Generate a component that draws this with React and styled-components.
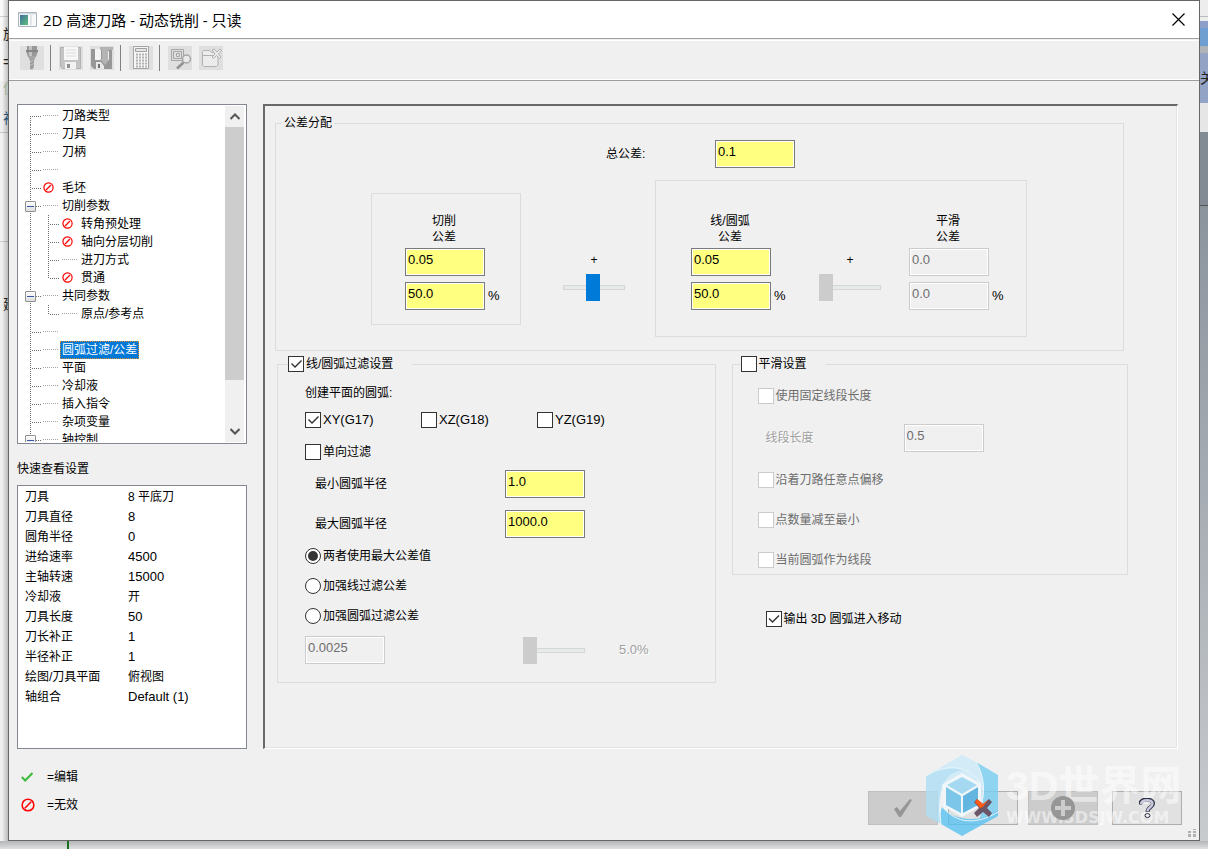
import React, { useState } from 'react';
import styled, { createGlobalStyle, css } from 'styled-components';

const GlobalStyle = createGlobalStyle`
  * {
    box-sizing: border-box;
  }

  body {
    margin: 0;
    background: #e4e5e6;
    color: #000;
    font-family: "Liberation Sans", "Noto Sans CJK SC", sans-serif;
    font-size: 12px;
    line-height: 16px;
  }

  button, input {
    font: inherit;
    color: inherit;
  }
`;

/* ---------- window frame ---------- */

const Desktop = styled.div`
  display: grid;
  grid-template-columns: 8px minmax(0, 1fr) 8px;
  grid-template-rows: 1fr 8px;
  min-height: 100vh;
`;

const LeftEdge = styled.div`
  display: flex;
  flex-direction: column;
  overflow: hidden;
  padding-left: 3px;
  background:
    linear-gradient(90deg, transparent 2px, rgba(0, 0, 0, 0.22)),
    linear-gradient(#fafafa 0 16px, #d0d0d0 16px 17px, #f8f8f8 17px 81px, #f0f0f0 81px 132px, #c8c8c8 132px 133px, #f2f2f2 133px 241px, #ccc 241px 242px, #f0f0f0 242px);
`;

const EdgeGlyph = styled.span`
  height: 20px;
  margin-top: ${({ $gap }) => $gap}px;
  font-size: 14px;
  line-height: 20px;
  white-space: nowrap;
  color: ${({ $color }) => $color || '#222'};
`;

const RightEdge = styled.div`
  overflow: hidden;
  padding-top: 68px;
  background: linear-gradient(
    #ededed 0 16px, #bdbdbd 16px 17px, #ededed 17px 21px, #8d9fc8 21px 28px, #6e9fd0 28px 46px,
    #b0b4b8 46px 53px, #92a3c6 53px 103px, #e6e6e6 103px 132px, #828a94 132px 205px,
    #555 205px 206px, #8b939d 206px, #c9cccf 849px
  );
`;

const BottomEdge = styled.div`
  grid-column: 1 / -1;
  padding-left: 67px;
  background: linear-gradient(#b4b5b6, #dfe0e1);
`;

const GreenMark = styled.div`
  width: 2px;
  height: 8px;
  background: #17711c;
`;

const Dialog = styled.main`
  position: relative;
  display: flex;
  flex-direction: column;
  border: 1px solid #666;
  background: #f0f0f0;
`;

const TitleBar = styled.header`
  display: flex;
  align-items: center;
  height: 38px;
  padding: 0 14px 0 9px;
  border-bottom: 1px solid #a0a0a0;
  background: #fff;
`;

const Title = styled.h1`
  flex: 1;
  margin: 0 0 0 6px;
  font: 15px/20px "Open Sans", "Noto Sans CJK SC", sans-serif;
`;

const CloseButton = styled.button`
  display: flex;
  padding: 0;
  border: 0;
  background: none;
`;

const Toolbar = styled.div`
  display: flex;
  align-items: center;
  height: 41px;
  margin-top: 1px;
  padding: 0 11px 4px 11px;
  border-bottom: 1px solid #9c9c9c;
  box-shadow: inset 0 1px #fff, inset 0 -1px #fff;
`;

const ToolButton = styled.button`
  width: 24px;
  height: 24px;
  margin-right: 7px;
  padding: 0;
  border: 0;
  background: #dfdfdf;

  svg {
    display: block;
  }
`;

const Separator = styled.div`
  width: 1px;
  height: 26px;
  margin: 0 8px 0 -1px;
  background: #808080;
`;

const Body = styled.div`
  flex: 1;
  display: grid;
  grid-template-columns: 230px minmax(0, 1fr);
  gap: 16px;
  padding: 23px 21px 0 8px;
`;

/* ---------- left column ---------- */

const SidePane = styled.div`
  display: flex;
  flex-direction: column;
`;

const TreeBox = styled.div`
  display: flex;
  height: 340px;
  padding: 1px;
  border: 1px solid #828790;
  background: #fff;
`;

const TreeList = styled.ul`
  flex: 1;
  margin: 0;
  padding: 1px 0 0;
  overflow: hidden;
  list-style: none;
`;

const TreeRow = styled.li`
  display: flex;
  align-items: center;
  height: 18px;
  white-space: nowrap;
`;

const trunkHeights = { full: '0 / 1px 100%', top: '0 / 1px 9px', bottom: '9px / 1px 9px' };

const Guide = styled.span`
  flex: none;
  display: flex;
  align-items: center;
  width: ${({ $narrow }) => ($narrow ? 18 : 23)}px;
  height: 18px;
  padding-left: 6px;
  background:
    repeating-linear-gradient(#6d6d6d 0 1px, transparent 1px 2px) 11px ${({ $trunk }) => trunkHeights[$trunk || 'full']} no-repeat,
    repeating-linear-gradient(90deg, #6d6d6d 0 1px, transparent 1px 2px) 13px 9px / ${({ $narrow }) => ($narrow ? 0 : 10)}px 1px no-repeat;
`;

const LevelTwoGuide = styled(Guide)`
  width: 24px;
`;

const Expander = styled.button`
  width: 11px;
  height: 11px;
  padding: 0;
  border: 1px solid #919191;
  border-radius: 1px;
  background: linear-gradient(#3b56a5, #3b56a5) 1px 4px / 7px 1px no-repeat, linear-gradient(#fff, #dedede);
`;

const NodeIcon = styled.span`
  flex: none;
  width: 18px;
  height: 18px;
  padding: 3px 0 0 1px;
  ${({ $empty }) => $empty && css`
    background: repeating-linear-gradient(90deg, #a5a5a5 0 1px, transparent 1px 2px) 1px 8px / 15px 1px no-repeat;
  `}

  svg {
    display: block;
  }
`;

const NodeLabel = styled.span`
  padding: 0 2px;
  ${({ $selected }) => $selected && css`
    outline: 1px dotted #e08a2c;
    outline-offset: -1px;
    background: #0078d7;
    color: #fff;
    line-height: 18px;
  `}
`;

const ScrollBar = styled.div`
  display: flex;
  flex-direction: column;
  width: 19px;
  margin-right: 1px;
  background: #f0f0f0;
`;

const ScrollButton = styled.button`
  display: flex;
  align-items: center;
  justify-content: center;
  height: 21px;
  padding: 0;
  border: 0;
  background: none;
`;

const ScrollTrack = styled.div`
  flex: 1;
`;

const ScrollThumb = styled.div`
  height: 86%;
  background: #cdcdcd;
`;

const QuickTitle = styled.h2`
  margin: 17px 0 8px;
  font-size: 12px;
  font-weight: normal;
  line-height: 16px;
`;

const QuickBox = styled.div`
  flex: 1;
  padding: 1px 7px;
  border: 1px solid #828790;
  background: #fff;
`;

const QuickTable = styled.table`
  width: 100%;
  border-collapse: collapse;

  th, td {
    height: 20px;
    padding: 0;
    font-weight: normal;
    text-align: left;
  }

  th {
    width: 103px;
  }
`;

const Latin = styled.span`
  font-size: 13px;
`;

/* ---------- settings panel ---------- */

const Panel = styled.section`
  padding: 9px 49px 20px 10px;
  border: 2px solid;
  border-width: 2px 1px 1px 2px;
  border-color: #696969 #fff #fff #696969;
  box-shadow: inset -1px -1px #e3e3e3;
`;

const Group = styled.fieldset`
  min-width: 0;
  margin: ${({ $margin }) => $margin || 0};
  padding: ${({ $padding }) => $padding};
  border: 1px solid #dcdcdc;
`;

const Legend = styled.legend`
  height: 16px;
  margin-left: 6px;
  padding: 0 2px;
`;

/* pulled back over the group's own side padding */
const CheckLegend = styled(Legend)`
  margin-left: -17px;
  padding: 0 19px 0 0;
`;

const Lower = styled.div`
  display: grid;
  grid-template-columns: 438fr 396fr;
  gap: 16px;
  align-items: start;
  margin: 5px 0 0 2px;
`;

const TotalRow = styled.div`
  display: flex;
  align-items: center;
  padding-left: 330px;

  label {
    width: 109px;
  }
`;

const SplitRow = styled.div`
  display: flex;
  align-items: center;
  margin-top: 12px;
  padding-left: 95px;
`;

const SubBox = styled.div`
  display: flex;
  align-items: flex-end;
  padding: ${({ $padding }) => $padding};
  border: 1px solid #dcdcdc;
`;

const Stack = styled.div`
  width: 100px;
`;

const StackTitle = styled.div`
  width: 78px;
  margin-bottom: 3px;
  text-align: center;
`;

const StackLine = styled.div`
  display: flex;
  align-items: center;
  gap: 3px;
  margin-top: ${({ $spaced }) => ($spaced ? 6 : 0)}px;
`;

const TextBox = styled.input`
  width: 80px;
  height: 28px;
  padding: 0 2px 5px 2px;
  border: 1px solid #7a7a7a;
  border-radius: 0;
  outline: none;
  background: #ffff80;
  box-shadow: inset 0 0 0 1px #fff;
  font-size: 13px;

  &:disabled {
    border-color: #ccc;
    background: #f0f0f0;
    color: #6d6d6d;
  }
`;

const SliderBox = styled.label`
  display: flex;
  flex-direction: column;
  align-items: center;
  gap: 6px;
  margin: ${({ $margin }) => $margin || 0};
  padding: 44px 0 9px;
`;

const Slider = styled.input`
  appearance: none;
  display: block;
  width: 62px;
  height: 27px;
  margin: 0;
  background: none;

  &::-webkit-slider-runnable-track {
    height: 5px;
    border: 1px solid #d6d6d6;
    background: #e7eaea;
  }

  &::-webkit-slider-thumb {
    appearance: none;
    width: 14px;
    height: 27px;
    margin: -12px -1px 0;
    border: 0;
    border-radius: 0;
    background: ${({ disabled }) => (disabled ? '#ccc' : '#007ad9')};
  }
`;

const Line = styled.div`
  display: flex;
  align-items: center;
  margin-top: ${({ $gap }) => $gap}px;
`;

const OutputLine = styled(Line)`
  padding-left: 34px;
`;

const FieldLabel = styled.label`
  width: ${({ $width }) => $width}px;
  padding-left: ${({ $indent }) => $indent || 0}px;
  ${({ $off }) => $off && css`
    color: #a0a0a0;
    text-shadow: 1px 1px #fff;
  `}
`;

const Percent = styled.span`
  margin-left: 34px;
  color: #a0a0a0;
  font-size: 13px;
  text-shadow: 1px 1px #fff;
`;

const Spacer = styled.div`
  width: 138px;
`;

const CheckLabel = styled.label`
  display: flex;
  align-items: center;
  gap: 2px;
  width: ${({ $width }) => ($width ? `${$width}px` : 'auto')};
  white-space: nowrap;
  color: ${({ $off }) => ($off ? '#6d6d6d' : '#000')};
`;

const CheckInput = styled.input`
  appearance: none;
  flex: none;
  width: 16px;
  height: 16px;
  margin: 0;
  border: 1px solid #333;
  background: #fff;

  &[type='radio'] {
    border-radius: 50%;
  }

  &:disabled {
    border-color: #ccc;
  }

  &:checked::before {
    content: '';
    display: block;
    width: 14px;
    height: 14px;
    background: #333;
    clip-path: polygon(2px 7px, 3px 6px, 6px 9px, 12px 3px, 13px 4px, 6px 11px);
  }

  &[type='radio']:checked::before {
    clip-path: circle(5px at 7px 7px);
  }
`;

/* ---------- footer ---------- */

const Footer = styled.footer`
  position: relative;
  display: flex;
  justify-content: space-between;
  padding: 20px 17px 15px 12px;
`;

const KeyList = styled.div`
  display: grid;
  align-content: start;
  gap: 12px;
`;

const KeyRow = styled.div`
  display: grid;
  grid-template-columns: 26px auto;
  align-items: center;
`;

const Actions = styled.div`
  display: flex;
  gap: 10px;
  padding-top: 22px;

  button:last-child {
    margin-left: 4px;
  }
`;

const ActionButton = styled.button`
  display: flex;
  align-items: center;
  justify-content: center;
  width: 70px;
  height: 34px;
  padding: 0;
  border: 1px solid #adadad;
  background: #e1e1e1;

  &:disabled {
    border-color: #bfbfbf;
    background: #ccc;
  }

  svg {
    position: relative;
    z-index: 1;
  }
`;

const Watermark = styled.div`
  position: absolute;
  right: 14px;
  bottom: 3px;
  display: flex;
  align-items: center;
  gap: 7px;
  pointer-events: none;
`;

const WatermarkText = styled.div`
  width: 179px;
  color: rgba(255, 255, 255, 0.5);
  font-weight: bold;
  white-space: nowrap;
`;

const WatermarkName = styled.div`
  font-size: 41px;
  line-height: 44px;
`;

const WatermarkUrl = styled.div`
  font: bold 16px/20px "DejaVu Sans", sans-serif;
`;

const Grip = styled.svg`
  position: absolute;
  right: 3px;
  bottom: 3px;
`;

/* ---------- drawings ---------- */

const NoEntry = ({ size = 11 }) => (
  <svg width={size} height={size} viewBox="0 0 11 11" fill="none" stroke="#f00" strokeWidth="1.2">
    <circle cx="5.5" cy="5.5" r="4.6" />
    <path d="M3 8 8 3" />
  </svg>
);

const AppIcon = () => (
  <svg width="19" height="15" viewBox="0 0 19 15">
    <defs>
      <linearGradient id="scr" x1="0" y1="0" x2="1" y2="1">
        <stop offset="0" stopColor="#3d6f9c" />
        <stop offset="1" stopColor="#5cc07a" />
      </linearGradient>
    </defs>
    <path d="M.5.5h18v14H.5z" fill="#f7f9fb" stroke="#a9b4bd" />
    <path d="M1 1h17v1.500H1z" fill="#d5dde4" />
    <path d="M2 3h8v10H2z" fill="url(#scr)" />
    <path d="M12 3h2v10h-2z" fill="#e1e6ea" />
  </svg>
);

const ToolHolder = () => (
  <svg width="24" height="24" viewBox="0 0 24 24">
    <path d="M7 0h10v4l1 1-1 3-1 3H8L7 8 6 5l1-1z" fill="#989898" />
    <path d="M9 0h3v10H9z" fill="#c4c4c4" />
    <path d="M6 4h12v2H6z" fill="#858585" />
    <path d="M8 10h8l-2 5h-4z" fill="#a5a5a5" />
    <path d="M10 15h4v7l-2 2-2-2z" fill="#b6b6b6" />
    <path d="m10 18 4-2m-4 5 4-2m-4 4 3-2" stroke="#888" />
  </svg>
);

const SaveIcon = () => (
  <svg width="24" height="24" viewBox="0 0 24 24">
    <path d="M1.500 1.500h20v21h-18l-2-2z" fill="#c4c4c4" stroke="#b2b2b2" />
    <path d="M5 1h14v13H5z" fill="#f7f7f7" />
    <path d="M7 4h10M7 7h10M7 10h10" stroke="#dcdcdc" />
    <path d="M6 16h11v7H6z" fill="#f2f2f2" />
    <path d="M8 18h3v4H8z" fill="#8e8e8e" />
  </svg>
);

const SaveDefaultIcon = () => (
  <svg width="24" height="24" viewBox="0 0 24 24">
    <path d="M1 3h21v20H4l-3-3z" fill="#979797" />
    <path d="M5 3h6v11H5z" fill="#f4f4f4" />
    <path d="M10 1h13v3h-5v9h2l-5 6-5-6h2V4h-2z" fill="#b4b4b4" />
    <path d="M18 5h1v8l-1 1z" fill="#efefef" />
    <path d="M6 16h5l3 4v3H6z" fill="#e8e8e8" />
    <path d="M8 18h2v4H8z" fill="#6f6f6f" />
  </svg>
);

const CalculatorIcon = () => (
  <svg width="24" height="24" viewBox="0 0 24 24">
    <path d="M4.500.5h15v22h-15z" fill="#f6f6f6" stroke="#a4a4a4" />
    <path d="M6.500 2.500h11v3h-11z" fill="#e5e5e5" stroke="#a0a0a0" />
    <path d="M7 8.500h11M7 11.500h11M7 14.500h11M7 17.500h11M7 20.500h11" stroke="#b2b2b2" strokeWidth="2" strokeDasharray="2 1" />
  </svg>
);

const InspectIcon = () => (
  <svg width="24" height="24" viewBox="0 0 24 24" fill="none" stroke="#a5a5a5">
    <path d="M3.500 3.500h12v11h-12zM5.500 5.500h8v7h-8zM8.500 7.500h3v3h-3z" />
    <circle cx="18.500" cy="13" r="4" fill="#e9e9e9" strokeWidth="1.500" />
    <path d="m15.500 16.500-6.500 6" stroke="#929292" strokeWidth="2.500" />
  </svg>
);

const FolderCloseIcon = () => (
  <svg width="24" height="24" viewBox="0 0 24 24" fill="none" stroke="#b1b1b1">
    <path d="M3.500 19V5.500l1-1h6l2 2h6.500V19l-1.500 1.500H5z" fill="#ececec" />
    <path d="M3.500 9.500h15" />
    <path d="m13 4 2-1 3 3 3-3 1.500 1.500L19.500 8l2.500 3-1.500 1.500-3-3-3 3L13 11l3-3z" fill="#e9e9e9" />
  </svg>
);

const WatermarkLogo = () => (
  <svg width="74" height="83" viewBox="0 0 74 83">
    <g opacity="0.8">
      <path d="M37 1 51 8c9 11 8 24 6 40L37 62 18 51V30L1 22z" fill="#cdeaf8" />
      <path d="M1 22v40l15 8c-3-13-2-27 2-40 5-9 12-14 24-14C27 12 12 14 1 22z" fill="#addff5" />
      <path d="M51 8l22 13v37c-6 5-12 8-19 10 5-21 8-41-3-60z" fill="#78cff3" />
      <path d="M17 53c5 7 17 12 29 12 10 0 19-3 27-9v6L37 82 16 70c-1-6-1-12 1-17z" fill="#5ac2f0" />
    </g>
    <path d="m37 19 19 11v22L37 63 18 52V30z" fill="#f0f6f9" />
    <path d="m37 23 15 8-15 9-15-9z" fill="#a5d9f1" />
    <path d="m21 33 15 9v17l-15-8z" fill="#7cc6ea" />
    <path d="m53 33-15 9v17l15-8z" fill="#62b6e0" />
    <path d="M1 22c22-14 45-9 54 7M51 8c9 15 9 30 5 44M16 70c-2-14-1-25 2-40M18 53c13 17 34 18 55 5" fill="none" stroke="#e9f6fc" />
  </svg>
);

/* ---------- data ---------- */

const nodes = [
  { text: '刀路类型', trunk: 'bottom' },
  { text: '刀具' },
  { text: '刀柄' },
  { text: '' },
  { text: '毛坯', off: true },
  { text: '切削参数', open: true },
  { text: '转角预处理', child: true, off: true },
  { text: '轴向分层切削', child: true, off: true },
  { text: '进刀方式', child: true },
  { text: '贯通', child: true, off: true, trunk: 'top' },
  { text: '共同参数', open: true },
  { text: '原点/参考点', child: true, trunk: 'top' },
  { text: '' },
  { text: '圆弧过滤/公差', selected: true },
  { text: '平面' },
  { text: '冷却液' },
  { text: '插入指令' },
  { text: '杂项变量' },
  { text: '轴控制', open: true },
];

const quickRows = [
  ['刀具', '8 平底刀'],
  ['刀具直径', '8'],
  ['圆角半径', '0'],
  ['进给速率', '4500'],
  ['主轴转速', '15000'],
  ['冷却液', '开'],
  ['刀具长度', '50'],
  ['刀长补正', '1'],
  ['半径补正', '1'],
  ['绘图/刀具平面', '俯视图'],
  ['轴组合', 'Default (1)'],
];

const radioOptions = ['两者使用最大公差值', '加强线过滤公差', '加强圆弧过滤公差'];

/* ---------- pieces ---------- */

const Check = ({ children, width, disabled, type = 'checkbox', ...rest }) => (
  <CheckLabel $width={width} $off={disabled}>
    <CheckInput type={type} disabled={disabled} {...rest} />
    {children}
  </CheckLabel>
);

const ToleranceStack = ({ name, value, percent, disabled }) => (
  <Stack>
    <StackTitle>
      {name}
      <br />
      公差
    </StackTitle>
    <StackLine>
      <TextBox aria-label={`${name}公差`} defaultValue={value} disabled={disabled} />
    </StackLine>
    <StackLine $spaced>
      <TextBox aria-label={`${name}公差 %`} defaultValue={percent} disabled={disabled} />
      <Latin>%</Latin>
    </StackLine>
  </Stack>
);

const TreeNode = ({ node }) => (
  <TreeRow role="treeitem" aria-selected={!!node.selected}>
    <Guide $narrow={node.child} $trunk={node.child ? 'full' : node.trunk}>
      {node.open && <Expander aria-label={node.text} />}
    </Guide>
    {node.child && <LevelTwoGuide $trunk={node.trunk} />}
    <NodeIcon $empty={!node.off}>{node.off && <NoEntry />}</NodeIcon>
    {node.text && <NodeLabel $selected={node.selected}>{node.text}</NodeLabel>}
  </TreeRow>
);

const App = () => {
  const [mode, setMode] = useState(0);

  return (
    <>
      <GlobalStyle />
      <Desktop>
        <LeftEdge aria-hidden="true">
          <EdgeGlyph $gap={24}>旋</EdgeGlyph>
          <EdgeGlyph $gap={8}>=</EdgeGlyph>
          <EdgeGlyph $gap={6} $color="#9ab09a">仿</EdgeGlyph>
          <EdgeGlyph $gap={10} $color="#1d4f73">视</EdgeGlyph>
          <EdgeGlyph $gap={166}>建</EdgeGlyph>
        </LeftEdge>

        <Dialog>
          <TitleBar>
            <AppIcon />
            <Title>2D 高速刀路 - 动态铣削 - 只读</Title>
            <CloseButton aria-label="关闭">
              <svg width="13" height="13" viewBox="0 0 13 13" stroke="#000" strokeWidth="1.2">
                <path d="m.5.5 12 12m0-12-12 12" />
              </svg>
            </CloseButton>
          </TitleBar>

          <Toolbar>
            <ToolButton aria-label="刀具"><ToolHolder /></ToolButton>
            <Separator />
            <ToolButton aria-label="保存"><SaveIcon /></ToolButton>
            <ToolButton aria-label="保存默认"><SaveDefaultIcon /></ToolButton>
            <Separator />
            <ToolButton aria-label="计算器"><CalculatorIcon /></ToolButton>
            <Separator />
            <ToolButton aria-label="检查"><InspectIcon /></ToolButton>
            <ToolButton aria-label="隐藏"><FolderCloseIcon /></ToolButton>
          </Toolbar>

          <Body>
            <SidePane>
              <TreeBox>
                <TreeList role="tree">
                  {nodes.map((node, i) => (
                    <TreeNode key={i} node={node} />
                  ))}
                </TreeList>
                <ScrollBar>
                  <ScrollButton aria-label="向上">
                    <svg width="10" height="7" viewBox="0 0 10 7" fill="none" stroke="#555" strokeWidth="2">
                      <path d="m.5 6 4.500-4.500L9.500 6" />
                    </svg>
                  </ScrollButton>
                  <ScrollTrack>
                    <ScrollThumb />
                  </ScrollTrack>
                  <ScrollButton aria-label="向下">
                    <svg width="10" height="7" viewBox="0 0 10 7" fill="none" stroke="#555" strokeWidth="2">
                      <path d="M.5 1 5 5.500 9.500 1" />
                    </svg>
                  </ScrollButton>
                </ScrollBar>
              </TreeBox>

              <QuickTitle>快速查看设置</QuickTitle>
              <QuickBox>
                <QuickTable>
                  <tbody>
                    {quickRows.map(([name, value]) => (
                      <tr key={name}>
                        <th scope="row">{name}</th>
                        <td>{/^[\x20-\x7e]+$/.test(value) ? <Latin>{value}</Latin> : value}</td>
                      </tr>
                    ))}
                  </tbody>
                </QuickTable>
              </QuickBox>
            </SidePane>

            <Panel>
              <Group $margin="0 4px 0 0" $padding="9px 0 13px">
                <Legend>公差分配</Legend>
                <TotalRow>
                  <label htmlFor="total">总公差:</label>
                  <TextBox id="total" defaultValue="0.1" />
                </TotalRow>
                <SplitRow>
                  <SubBox $padding="19px 15px 14px 33px">
                    <ToleranceStack name="切削" value="0.05" percent="50.0" />
                  </SubBox>
                  <SliderBox $margin="0 30px 0 42px">
                    +
                    <Slider type="range" defaultValue="50" />
                  </SliderBox>
                  <SubBox $padding="27px 17px 26px 35px">
                    <ToleranceStack name="线/圆弧" value="0.05" percent="50.0" />
                    <SliderBox $margin="0 28px">
                      +
                      <Slider type="range" defaultValue="0" disabled />
                    </SliderBox>
                    <ToleranceStack name="平滑" value="0.0" percent="0.0" disabled />
                  </SubBox>
                </SplitRow>
              </Group>

              <Lower>
                <Group $padding="0 27px 18px">
                  <CheckLegend>
                    <Check defaultChecked>线/圆弧过滤设置</Check>
                  </CheckLegend>
                  <Line $gap={13}>创建平面的圆弧:</Line>
                  <Line $gap={11}>
                    <Check width={116} defaultChecked><Latin>XY(G17)</Latin></Check>
                    <Check width={116}><Latin>XZ(G18)</Latin></Check>
                    <Check><Latin>YZ(G19)</Latin></Check>
                  </Line>
                  <Line $gap={16}>
                    <Check>单向过滤</Check>
                  </Line>
                  <Line $gap={10}>
                    <FieldLabel htmlFor="min-radius" $width={200} $indent={10}>最小圆弧半径</FieldLabel>
                    <TextBox id="min-radius" defaultValue="1.0" />
                  </Line>
                  <Line $gap={12}>
                    <FieldLabel htmlFor="max-radius" $width={200} $indent={10}>最大圆弧半径</FieldLabel>
                    <TextBox id="max-radius" defaultValue="1000.0" />
                  </Line>
                  {radioOptions.map((option, i) => (
                    <Line key={option} $gap={i ? 14 : 10}>
                      <Check type="radio" name="mode" checked={mode === i} onChange={() => setMode(i)}>
                        {option}
                      </Check>
                    </Line>
                  ))}
                  <Line $gap={12}>
                    <TextBox aria-label="过滤公差" defaultValue="0.0025" disabled />
                    <Spacer />
                    <Slider type="range" aria-label="过滤比例" defaultValue="0" disabled />
                    <Percent>5.0%</Percent>
                  </Line>
                </Group>

                <div>
                  <Group $padding="0 25px 6px">
                    <CheckLegend>
                      <Check>平滑设置</Check>
                    </CheckLegend>
                    <Line $gap={16}>
                      <Check disabled>使用固定线段长度</Check>
                    </Line>
                    <Line $gap={20}>
                      <FieldLabel htmlFor="segment" $width={146} $indent={8} $off>线段长度</FieldLabel>
                      <TextBox id="segment" defaultValue="0.5" disabled />
                    </Line>
                    <Line $gap={20}>
                      <Check disabled>沿着刀路任意点偏移</Check>
                    </Line>
                    <Line $gap={24}>
                      <Check disabled>点数量减至最小</Check>
                    </Line>
                    <Line $gap={24}>
                      <Check disabled>当前圆弧作为线段</Check>
                    </Line>
                  </Group>
                  <OutputLine $gap={36}>
                    <Check defaultChecked>输出 3D 圆弧进入移动</Check>
                  </OutputLine>
                </div>
              </Lower>
            </Panel>
          </Body>

          <Footer>
            <KeyList>
              <KeyRow>
                <svg width="12" height="10" viewBox="0 0 12 10" fill="none" stroke="#3cb83c" strokeWidth="2">
                  <path d="m.8 5 3.400 3.500L11.500 1" />
                </svg>
                <span>=编辑</span>
              </KeyRow>
              <KeyRow>
                <NoEntry size={14} />
                <span>=无效</span>
              </KeyRow>
            </KeyList>
            <Actions>
              <ActionButton disabled aria-label="确定">
                <svg width="20" height="20" viewBox="0 0 20 20" fill="#969696">
                  <path d="m1 11 3-2 3 4L17 1l2 1L8 19H6z" />
                </svg>
              </ActionButton>
              <ActionButton aria-label="取消">
                <svg width="20" height="20" viewBox="0 0 20 20">
                  <path d="m1 4 3-3 6 5 6-5 3 3-5 6 5 5-3 4-6-5-6 5-3-4 5-5z" fill="#6b5668" />
                  <path d="m2 4 2-3 6 5 5-4-5 7-3 1z" fill="#ff5a14" />
                </svg>
              </ActionButton>
              <ActionButton disabled aria-label="应用">
                <svg width="24" height="24" viewBox="0 0 24 24">
                  <circle cx="12" cy="12" r="12" fill="#969696" />
                  <path d="M12 4v16M4 12h16" stroke="#ccc" strokeWidth="4" />
                </svg>
              </ActionButton>
              <ActionButton aria-label="帮助">
                <svg width="16" height="20" viewBox="0 0 16 20" fill="none">
                  <path d="M1 6.500C1 0 14 0 14 5.500c0 4-5.500 3.500-5.500 8.500" stroke="#2f2f45" strokeWidth="4" />
                  <path d="M2 6C2.500 1 13.500 1 13.500 5.500c0 4-5 3.500-5 8" stroke="#c9c9de" strokeWidth="2.500" />
                  <ellipse cx="8.500" cy="17.500" rx="2.500" ry="2" fill="#eee" stroke="#2f2f45" />
                </svg>
              </ActionButton>
            </Actions>
            <Watermark aria-hidden="true">
              <WatermarkLogo />
              <WatermarkText>
                <WatermarkName>3D世界网</WatermarkName>
                <WatermarkUrl>WWW.3DSJW.COM</WatermarkUrl>
              </WatermarkText>
            </Watermark>
            <Grip width="8" height="8" viewBox="0 0 8 8" fill="#b0b0b0">
              <path d="M5 0h3v1H5zM0 2h3v2H0zM5 2h3v2H5zM0 5h3v3H0zM5 5h3v3H5z" />
            </Grip>
          </Footer>
        </Dialog>

        <RightEdge aria-hidden="true">
          <EdgeGlyph $gap={0}>关</EdgeGlyph>
        </RightEdge>
        <BottomEdge>
          <GreenMark />
        </BottomEdge>
      </Desktop>
    </>
  );
};

export default App;
